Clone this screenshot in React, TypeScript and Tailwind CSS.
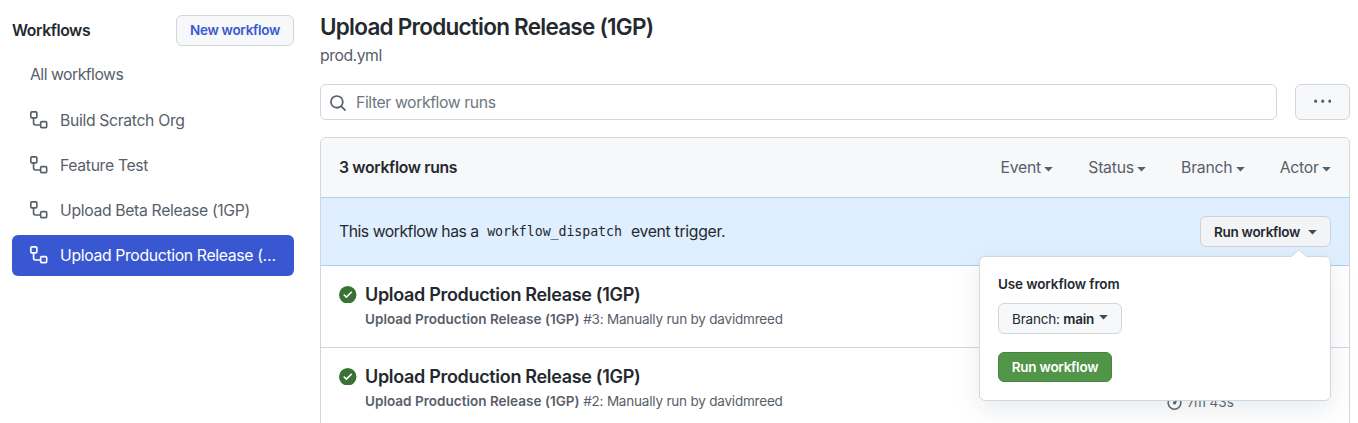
import type { ReactNode } from "react";

function Icon({ d, className }: { d: string; className: string }) {
  return (
    <svg viewBox="0 0 16 16" fill="currentColor" fillRule="evenodd" className={`shrink-0 ${className}`} aria-hidden="true">
      <path d={d} />
    </svg>
  );
}

const WORKFLOW =
  "M0 1.75C0 .784.784 0 1.75 0h3.5C6.216 0 7 .784 7 1.75v3.5A1.75 1.75 0 0 1 5.25 7H4v4a1 1 0 0 0 1 1h4v-1.25C9 9.784 9.784 9 10.75 9h3.5c.966 0 1.75.784 1.75 1.75v3.5A1.75 1.75 0 0 1 14.25 16h-3.5A1.75 1.75 0 0 1 9 14.25v-.75H5A2.5 2.5 0 0 1 2.5 11V7h-.75A1.75 1.75 0 0 1 0 5.25Zm1.75-.25a.25.25 0 0 0-.25.25v3.5c0 .138.112.25.25.25h3.5a.25.25 0 0 0 .25-.25v-3.5a.25.25 0 0 0-.25-.25Zm9 9a.25.25 0 0 0-.25.25v3.5c0 .138.112.25.25.25h3.5a.25.25 0 0 0 .25-.25v-3.5a.25.25 0 0 0-.25-.25Z";
const SEARCH =
  "M10.68 11.74a6 6 0 0 1-7.922-8.982 6 6 0 0 1 8.982 7.922l3.04 3.04a.749.749 0 0 1-.326 1.275.749.749 0 0 1-.734-.215ZM11.5 7a4.499 4.499 0 1 0-8.997 0A4.499 4.499 0 0 0 11.5 7Z";
const KEBAB =
  "M8 9a1.5 1.5 0 1 0 0-3 1.5 1.5 0 0 0 0 3ZM1.5 9a1.5 1.5 0 1 0 0-3 1.5 1.5 0 0 0 0 3Zm13 0a1.5 1.5 0 1 0 0-3 1.5 1.5 0 0 0 0 3Z";
const CHECK =
  "M8 16A8 8 0 1 1 8 0a8 8 0 0 1 0 16Zm3.78-9.72a.751.751 0 0 0-.018-1.042.751.751 0 0 0-1.042-.018L6.75 9.19 5.28 7.72a.751.751 0 0 0-1.042.018.751.751 0 0 0-.018 1.042l2 2a.75.75 0 0 0 1.06 0Z";
const STOPWATCH =
  "M5.75.75A.75.75 0 0 1 6.5 0h3a.75.75 0 0 1 0 1.5h-.75v1l-.001.041a6.724 6.724 0 0 1 3.464 1.435l.007-.006.75-.75a.749.749 0 0 1 1.275.326.749.749 0 0 1-.215.734l-.75.75-.006.007a6.75 6.75 0 1 1-10.548 0L2.72 5.03l-.75-.75a.751.751 0 0 1 .018-1.042.751.751 0 0 1 1.042-.018l.75.75.007.006A6.72 6.72 0 0 1 7.25 2.541V1.5H6.5a.75.75 0 0 1-.75-.75ZM8 14.5a5.25 5.25 0 1 0-.001-10.501A5.25 5.25 0 0 0 8 14.5Zm.389-6.7 1.33-1.33a.75.75 0 1 1 1.061 1.06L9.45 8.861A1.503 1.503 0 0 1 8 10.75a1.499 1.499 0 1 1 .389-2.95Z";

function Caret({ className = "" }: { className?: string }) {
  return (
    <svg viewBox="0 0 9 5" fill="currentColor" className={`h-[5px] w-[9px] shrink-0 ${className}`} aria-hidden="true">
      <path d="M0.2 0H8.8L4.5 4.5Z" />
    </svg>
  );
}

function NavItem({ children, active = false }: { children: ReactNode; active?: boolean }) {
  return (
    <a
      className={`flex h-[41px] items-center gap-[12.5px] rounded-md pl-[18px] pr-[16px] text-[15.75px] tracking-[-0.34px] ${
        active ? "bg-[#3a57d2] text-white" : "text-[#57606a]"
      }`}
    >
      <Icon d={WORKFLOW} className="mb-[1.5px] size-[17.5px]" />
      <span className="truncate">{children}</span>
    </a>
  );
}

function Run({ number }: { number: number }) {
  return (
    <div className="flex h-[82px] border-b border-[#d0d7de] pl-[18px] pt-[15px]">
      <Icon d={CHECK} className="mt-[4.75px] size-[17.5px] text-[#3a7134]" />
      <div className="ml-[8.5px] w-[801px]">
        <div className="text-[18px] font-semibold leading-[28px] tracking-[-0.32px] text-[#24292f]">Upload Production Release (1GP)</div>
        <div className="text-[13.5px] leading-5 tracking-[-0.2px] text-[#57606a]">
          <span className="font-semibold tracking-[0.02px]">Upload Production Release (1GP)</span> #{number}: Manually run by davidmreed
        </div>
      </div>
      {number === 2 && (
        <div className="flex items-center gap-1 self-start pt-[29px] text-[13.5px] leading-5 text-[#57606a]">
          <Icon d={STOPWATCH} className="mb-[2px] size-[17px]" />
          <span>7m 43s</span>
        </div>
      )}
    </div>
  );
}

export default function App() {
  return (
    <div className="flex h-[423px] w-[1358px] overflow-hidden bg-white pl-3 font-['Inter','Liberation_Sans',sans-serif] text-[15.75px] text-[#24292f]">
      <aside className="w-[282px] shrink-0 pt-[15px]">
        <div className="flex h-[31px] items-center justify-between">
          <h2 className="font-semibold tracking-[-0.4px]">Workflows</h2>
          <button className="h-[31px] w-[118px] whitespace-nowrap rounded-md border border-[#d3d6d9] bg-[#f6f8fa] text-[13.5px] font-semibold tracking-[-0.3px] text-[#3a57d2]">
            New workflow
          </button>
        </div>
        <nav className="mt-2 flex flex-col gap-1">
          <a className="flex h-[42px] items-center pl-[18px] tracking-[-0.5px] text-[#57606a]">All workflows</a>
          <NavItem>Build Scratch Org</NavItem>
          <NavItem>Feature Test</NavItem>
          <NavItem>Upload Beta Release (1GP)</NavItem>
          <NavItem active>Upload Production Release (1GP)</NavItem>
        </nav>
      </aside>

      <main className="ml-[26px] w-[1030px] shrink-0 pt-[11px]">
        <h1 className="text-[22.5px] font-semibold leading-8 tracking-[-0.75px]">Upload Production Release (1GP)</h1>
        <div className="leading-[26px] tracking-[-0.45px] text-[#57606a]">prod.yml</div>
        <div className="mt-[15px] flex gap-[18px]">
          <div className="flex h-9 w-[957px] items-center rounded-md border border-[#d0d7de] pl-2 pt-[2px] text-[#6e7781]">
            <Icon d={SEARCH} className="size-[18px] text-[#57606a]" />
            <span className="ml-[9px] tracking-[-0.4px]">Filter workflow runs</span>
          </div>
          <button className="flex h-9 w-[55px] items-center justify-center rounded-md border border-[#d3d6d9] bg-[#f6f8fa] text-[#57606a]">
            <Icon d={KEBAB} className="size-[17.5px]" />
          </button>
        </div>

        <section className="mt-[17px] h-[400px] rounded-t-md border border-[#d0d7de]">
          <header className="flex h-[60px] items-center justify-between rounded-t-md border-b border-[#accff7] bg-[#f6f8fa] px-[18px]">
            <strong className="font-semibold tracking-[-0.32px]">3 workflow runs</strong>
            <div className="flex gap-[35px] tracking-[-0.24px] text-[#57606a]">
              {["Event", "Status", "Branch", "Actor"].map((name) => (
                <span key={name} className="flex items-center gap-[3.3px]">
                  {name}
                  <Caret className="mt-[3px]" />
                </span>
              ))}
            </div>
          </header>
          <div className="flex h-[68px] items-center justify-between border-b border-[#accbf9] bg-[#dfefff] px-[18px]">
            <p className="flex items-center whitespace-pre tracking-[-0.48px]">
              This workflow has a
              <code className="ml-[8.5px] mr-[9px] font-['DejaVu_Sans_Mono',monospace] text-[13.3px] tracking-[-0.08px]">workflow_dispatch</code>
              <span className="tracking-[-0.3px]">event trigger.</span>
            </p>
            <div className="relative">
              <button className="flex h-[31px] w-[131px] items-center justify-center gap-[8px] whitespace-nowrap rounded-md border border-[#cfd1d4] bg-[#f3f4f6] pt-px text-[13.5px] font-semibold tracking-[-0.27px]">
                Run workflow
                <Caret className="text-[#45494e]" />
              </button>
              <div className="absolute right-0 top-[40px] z-10 h-[145px] w-[352px] rounded-md border border-[#d0d7de] bg-white px-[18px] pt-[17px] shadow-[0_8px_24px_rgba(140,149,159,0.2)]">
                <svg viewBox="0 0 18 9" className="absolute -top-[8px] right-[22px] h-[9px] w-[18px]" aria-hidden="true">
                  <path d="M0 9 L9 0.7 L18 9 Z" fill="white" />
                  <path d="M0.8 8 L9 0.7 L17.2 8" fill="none" stroke="#d0d7de" />
                </svg>
                <div className="text-[13.5px] font-semibold leading-5 tracking-[-0.12px]">Use workflow from</div>
                <button className="mt-[9px] flex h-[31px] w-[124px] items-center whitespace-pre rounded-md border border-[#d3d6d9] bg-[#f6f8fa] pl-[13px] pt-[2px] text-[13.5px] tracking-[-0.2px]">
                  Branch: <span className="font-semibold">main</span>
                  <Caret className="-mt-[4px] ml-[4.5px] text-[#45494e]" />
                </button>
                <button className="mt-[18px] block h-[30px] w-[114px] whitespace-nowrap rounded-md border border-[#488440] bg-[#519648] text-[13.5px] font-semibold tracking-[-0.25px] text-white">
                  Run workflow
                </button>
              </div>
            </div>
          </div>
          <Run number={3} />
          <Run number={2} />
        </section>
      </main>
    </div>
  );
}
